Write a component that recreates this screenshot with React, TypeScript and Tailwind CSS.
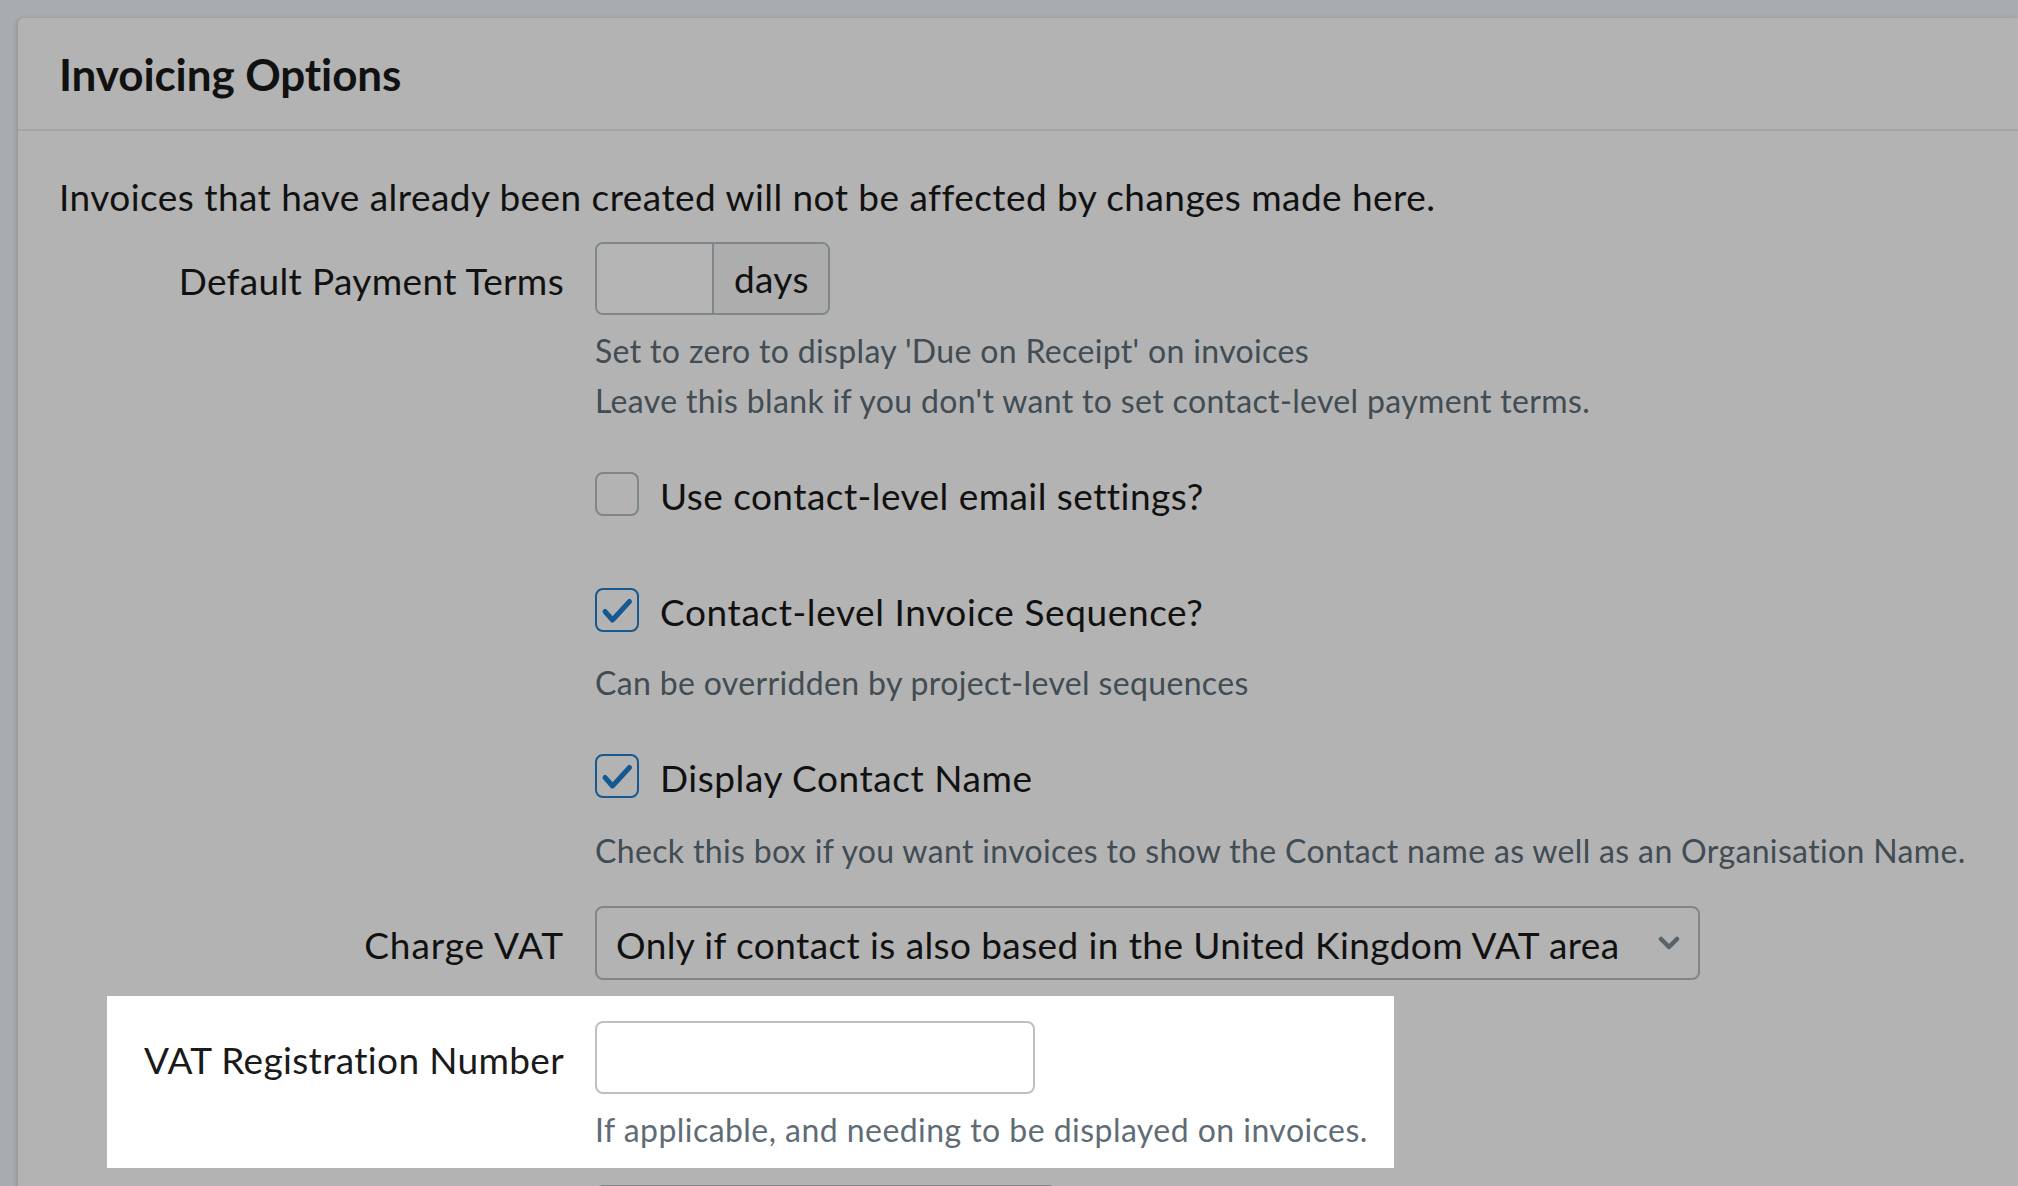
import React from "react";

const font = { fontFamily: "Lato, 'Open Sans', sans-serif" };

function Check({ checked }: { checked: boolean }) {
  if (!checked) {
    return <div className="w-[44px] h-[44px] shrink-0 rounded-[8px] border-2 border-[#7f878b]" />;
  }
  return (
    <div className="w-[44px] h-[44px] shrink-0 rounded-[8px] border-2 border-[#165890] flex items-center justify-center">
      <svg width="44" height="44" viewBox="0 0 44 44" className="-m-[2px]">
        <path d="M10 23.5 L17.5 32 L34.5 13.5" fill="none" stroke="#165890" strokeWidth="5" strokeLinecap="round" strokeLinejoin="round" />
      </svg>
    </div>
  );
}

export default function App() {
  return (
    <div className="w-[2018px] h-[1186px] overflow-hidden bg-[#a8acaf] pt-[18px] pl-[18px]" style={font}>
      <div className="h-[1300px] bg-[#b3b3b3] rounded-tl-[6px] shadow-[-2px_0_4px_rgba(0,0,0,0.12)]">
        <div className="h-[113px] border-b-2 border-[#a3a4a8] px-[41px] flex items-center">
          <h1 className="text-[44px] font-bold text-[#111] leading-none tracking-[-0.1px]">Invoicing Options</h1>
        </div>
        <div className="pl-[41px] pt-[41px]">
          <p className="text-[37px] leading-[50px] tracking-[0.45px] text-[#111]">
            Invoices that have already been created will not be affected by changes made here.
          </p>

          <div className="grid grid-cols-[505px_1fr] gap-x-[31px] mt-[20px]">
            <div className="h-[73px] pt-[4px] flex items-center justify-end text-[37px] tracking-[0.35px] text-[#111]">Default Payment Terms</div>
            <div>
              <div className="flex w-[235px] h-[73px] border-2 border-[#7f878b] rounded-[8px] overflow-hidden">
                <div className="w-[115px] bg-[#b4b4b4]" />
                <div className="flex-1 border-l-2 border-[#7f878b] bg-[#adadad] flex items-center pl-[20px] text-[37px] tracking-[0.35px] text-[#111]">days</div>
              </div>
              <div className="mt-[11px] text-[32px] leading-[50px] tracking-[0.35px] text-[#414c53]">
                <div>Set to zero to display 'Due on Receipt' on invoices</div>
                <div>Leave this blank if you don't want to set contact-level payment terms.</div>
              </div>

              <div className="mt-[46px] flex items-center gap-[21px] h-[44px]">
                <Check checked={false} />
                <span className="pt-[4px] text-[37px] tracking-[0.45px] text-[#111]">Use contact-level email settings?</span>
              </div>

              <div className="mt-[72px] flex items-center gap-[21px] h-[44px]">
                <Check checked={true} />
                <span className="pt-[4px] text-[37px] tracking-[0.6px] text-[#111]">Contact-level Invoice Sequence?</span>
              </div>
              <div className="mt-[26px] text-[32px] leading-[50px] tracking-[0.35px] text-[#414c53]">Can be overridden by project-level sequences</div>

              <div className="mt-[46px] flex items-center gap-[21px] h-[44px]">
                <Check checked={true} />
                <span className="pt-[4px] text-[37px] tracking-[0.55px] text-[#111]">Display Contact Name</span>
              </div>
              <div className="mt-[28px] text-[32px] leading-[50px] tracking-[0.35px] text-[#414c53]">
                Check this box if you want invoices to show the Contact name as well as an Organisation Name.
              </div>
            </div>
          </div>

          <div className="grid grid-cols-[505px_1fr] gap-x-[31px] mt-[30px]">
            <div className="h-[74px] pt-[4px] flex items-center justify-end text-[37px] tracking-[0.9px] text-[#111]">Charge VAT</div>
            <div className="w-[1105px] h-[74px] border-2 border-[#7f878b] rounded-[8px] flex items-center justify-between pl-[19px] pr-[18px]">
              <span className="pt-[3px] text-[37px] tracking-[0.4px] text-[#111]">Only if contact is also based in the United Kingdom VAT area</span>
              <svg width="22" height="14" viewBox="0 0 22 14">
                <path d="M3 3 L11 11 L19 3" fill="none" stroke="#58636a" strokeWidth="4.5" strokeLinecap="round" strokeLinejoin="round" />
              </svg>
            </div>
          </div>

          <div className="ml-[48px] w-[1287px] bg-white mt-[16px] pt-[25px] pb-[13px] grid grid-cols-[457px_1fr] gap-x-[31px]">
            <div className="h-[73px] pt-[4px] flex items-center justify-end text-[37px] tracking-[0.35px] text-[#1a1a1a]">VAT Registration Number</div>
            <div>
              <div className="w-[440px] h-[73px] border-2 border-[#b9c1c6] rounded-[8px] bg-white" />
              <div className="mt-[11px] text-[32px] leading-[50px] tracking-[0.45px] text-[#5f6c75]">If applicable, and needing to be displayed on invoices.</div>
            </div>
          </div>

          <div className="grid grid-cols-[505px_1fr] gap-x-[31px] mt-[17px]">
            <div />
            <div className="w-[462px] h-[73px] border-2 border-[#7f878b] rounded-[8px]" />
          </div>
        </div>
      </div>
    </div>
  );
}
